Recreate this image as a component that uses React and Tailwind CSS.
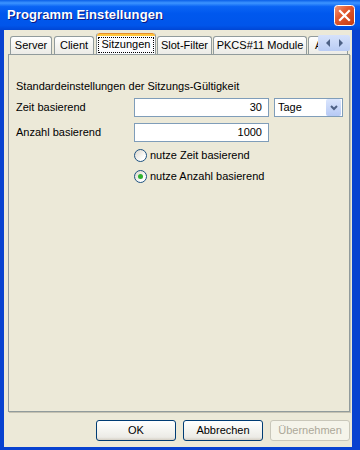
import { useState } from 'react';

const tabs = [
  { label: 'Server', cls: 'ml-[2px] w-[42px]' },
  { label: 'Client', cls: 'ml-[2px] w-[40px]' },
  { label: 'Sitzungen', cls: 'ml-[2px] w-[60px]', active: true },
  { label: 'Slot-Filter', cls: 'ml-[1px] w-[55px]' },
  { label: 'PKCS#11 Module', cls: 'ml-[1px] w-[94px]' },
  { label: 'A', cls: 'ml-[1px] w-[40px] justify-start pl-[6px]' },
];

function Tab({ label, cls, active }) {
  if (active) {
    return (
      <div className={`${cls} relative z-10 -mb-px flex h-[22px] shrink-0 flex-col overflow-hidden rounded-t-[3px] border-x border-[#919b9c] bg-[#fcfcfe]`}>
        <div className="h-[3px] shrink-0 rounded-t-[3px] border-t border-[#e68b2c] bg-[#ffc73c]" />
        <div className="flex flex-1 items-center justify-center px-[1px] pb-[2px]">
          <span className="flex h-[16px] w-full items-center justify-center border border-dotted border-black leading-none">{label}</span>
        </div>
      </div>
    );
  }
  return (
    <div className={`${cls} flex h-[18px] shrink-0 items-center justify-center rounded-t-[3px] border-x border-t border-[#919b9c] bg-[linear-gradient(to_bottom,#ffffff,#f3f3ef_60%,#ecebe6)] leading-none`}>
      {label}
    </div>
  );
}

function Radio({ checked, label, onClick }) {
  return (
    <div className="flex h-[21px] cursor-default items-center" onClick={onClick}>
      <span className="flex h-[13px] w-[13px] items-center justify-center rounded-full border border-[#1c5180] bg-[linear-gradient(135deg,#dcd7cb,#ffffff_75%)]">
        {checked && <span className="h-[5px] w-[5px] rounded-full bg-[#2fb12f]" />}
      </span>
      <span className="ml-[3px]">{label}</span>
    </div>
  );
}

function XpButton({ children, disabled }) {
  return (
    <button
      disabled={disabled}
      className={
        disabled
          ? 'flex h-[21px] w-[80px] items-center justify-center rounded-[3px] border border-[#c9c7ba] bg-[#f5f4ea] text-[#aca899]'
          : 'flex h-[21px] w-[80px] items-center justify-center rounded-[3px] border border-[#003c74] bg-[linear-gradient(to_bottom,#ffffff,#f4f4f0_50%,#ecebe6_85%,#d6d0c5)] text-black'
      }
    >
      {children}
    </button>
  );
}

function CloseIcon() {
  return (
    <svg width="21" height="21" viewBox="0 0 21 21">
      <defs>
        <linearGradient id="xpClose" x1="0" y1="0" x2="1" y2="1">
          <stop offset="0" stopColor="#f39b7b" />
          <stop offset="0.4" stopColor="#e2592f" />
          <stop offset="1" stopColor="#c43a10" />
        </linearGradient>
      </defs>
      <rect x="0.5" y="0.5" width="20" height="20" rx="3" fill="url(#xpClose)" stroke="#ffffff" />
      <path d="M6 6 L15 15 M15 6 L6 15" stroke="#fff" strokeWidth="2.2" strokeLinecap="square" />
    </svg>
  );
}

export default function App() {
  const [mode, setMode] = useState('anzahl');

  return (
    <div className="flex h-[450px] w-[360px] flex-col overflow-hidden bg-[#0842d0] font-['Liberation_Sans',Arial,sans-serif] text-[11px] text-black">
      <div className="flex h-[30px] shrink-0 items-center bg-[linear-gradient(to_bottom,#0a5fe8,#3d95ff_10%,#0a64f4_22%,#0058ee_45%,#0055ea_85%,#0046d5)] pl-[7px] pr-[5px]">
        <span className="flex-1 text-[13px] font-bold tracking-[0.1px] text-white [text-shadow:1px_1px_0_#0a1883]">Programm Einstellungen</span>
        <CloseIcon />
      </div>

      <div className="flex flex-1 flex-col border-b-[3px] border-l-4 border-r-[8px] border-[#0842d0] bg-[#ece9d8]">
        <div className="relative ml-[4px] mt-[3px] flex h-[21px] w-[342px] items-end overflow-hidden">
          {tabs.map((t) => (
            <Tab key={t.label} {...t} />
          ))}
          <div className="absolute left-[310px] top-[2px] flex h-[16px] w-[32px] items-center justify-around rounded-[2px] bg-[linear-gradient(to_bottom,#d6e2fb,#b9ccf4)] px-[3px]">
            <svg width="6" height="8" viewBox="0 0 6 8"><path d="M5 0 L1 4 L5 8 Z" fill="#4d6185" /></svg>
            <svg width="6" height="8" viewBox="0 0 6 8"><path d="M1 0 L5 4 L1 8 Z" fill="#4d6185" /></svg>
          </div>
        </div>

        <div className="ml-[4px] flex h-[358px] w-[342px] shrink-0 flex-col border border-[#919b9c] bg-[#ece9d8] pl-[7px] pt-[24px] shadow-[1px_1px_0_#c5c2b2]">
          <div className="h-[14px] leading-[14px]">Standardeinstellungen der Sitzungs-Gültigkeit</div>

          <div className="mt-[5px] flex h-[19px] items-center">
            <span className="w-[118px]">Zeit basierend</span>
            <div className="flex h-[19px] w-[135px] items-center justify-end border border-[#7f9db9] bg-white pr-[6px]">30</div>
            <div className="ml-[5px] flex h-[19px] w-[69px] items-center border border-[#7f9db9] bg-white">
              <span className="flex-1 pl-[3px]">Tage</span>
              <span className="mr-[1px] flex h-[17px] w-[15px] items-center justify-center rounded-[2px] bg-[linear-gradient(to_bottom,#dbe6fd,#b6c9f5)]">
                <svg width="8" height="6" viewBox="0 0 8 6">
                  <path d="M1 1 L4 4 L7 1" fill="none" stroke="#4d6185" strokeWidth="2" />
                </svg>
              </span>
            </div>
          </div>

          <div className="mt-[6px] flex h-[19px] items-center">
            <span className="w-[118px]">Anzahl basierend</span>
            <div className="flex h-[19px] w-[135px] items-center justify-end border border-[#7f9db9] bg-white pr-[6px]">1000</div>
          </div>

          <div className="ml-[118px] mt-[3px] flex flex-col">
            <Radio checked={mode === 'zeit'} label="nutze Zeit basierend" onClick={() => setMode('zeit')} />
            <Radio checked={mode === 'anzahl'} label="nutze Anzahl basierend" onClick={() => setMode('anzahl')} />
          </div>
        </div>

        <div className="mt-[8px] flex gap-[7px] pl-[92px]">
          <XpButton>OK</XpButton>
          <XpButton>Abbrechen</XpButton>
          <XpButton disabled>Übernehmen</XpButton>
        </div>
      </div>
    </div>
  );
}
